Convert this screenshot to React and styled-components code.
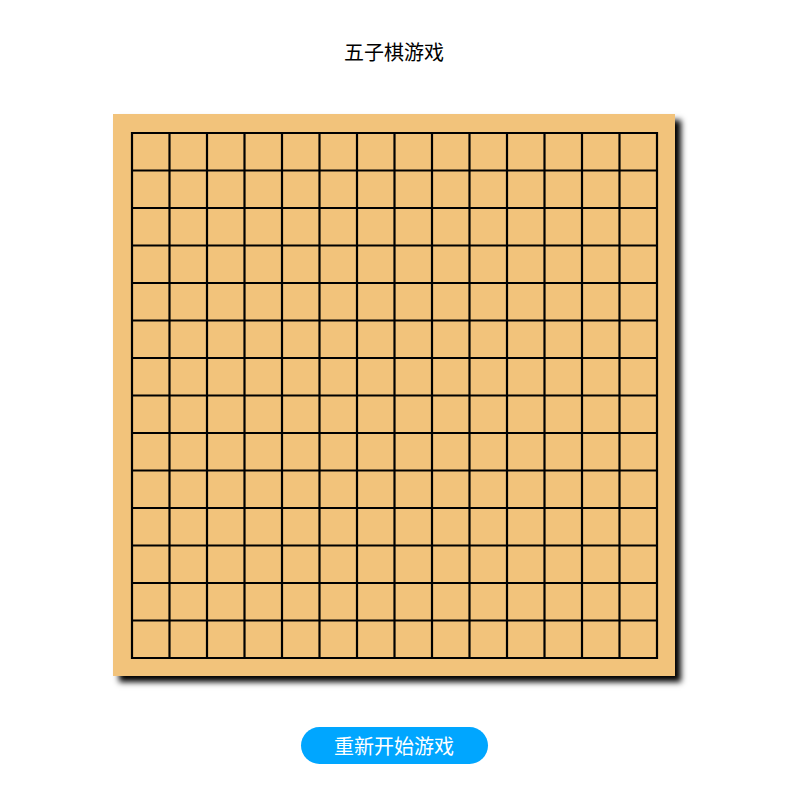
import React from "react";
import styled, { createGlobalStyle } from "styled-components";

const Global = createGlobalStyle`
  html, body { margin: 0; padding: 0; background: #fff; }
  body { font-family: "Noto Sans CJK SC", "Liberation Sans", sans-serif; }
`;

const Page = styled.div`
  display: flex;
  flex-direction: column;
  align-items: center;
  padding-top: 38px;
`;

const Title = styled.h1`
  margin: 0;
  height: 28px;
  line-height: 28px;
  font-size: 20px;
  font-weight: 400;
  color: #000;
`;

const Board = styled.div`
  margin-top: 48px;
  width: 562px;
  height: 562px;
  background: #f2c37b;
  box-shadow: 6px 6px 6px #000;
  display: flex;
`;

const Restart = styled.button`
  margin-top: 51px;
  width: 187px;
  height: 37px;
  border: none;
  border-radius: 19px;
  background: #00a6ff;
  color: #fff;
  font-family: "Noto Sans CJK SC", "Liberation Sans", sans-serif;
  font-size: 20px;
  line-height: 37px;
  padding: 0;
  cursor: pointer;
`;

const SIZE = 15;
const START = 19;
const STEP = 37.5;

function Grid() {
  const end = START + STEP * (SIZE - 1);
  const lines = [];
  for (let i = 0; i < SIZE; i++) {
    const p = START + STEP * i;
    lines.push(<line key={"h" + i} x1={START - 1} y1={p} x2={end + 1} y2={p} />);
    lines.push(<line key={"v" + i} x1={p} y1={START - 1} x2={p} y2={end + 1} />);
  }
  return (
    <svg width="562" height="562" viewBox="0 0 562 562">
      <g stroke="#000" strokeWidth="2.2">{lines}</g>
    </svg>
  );
}

export default function App() {
  return (
    <>
      <Global />
      <Page>
        <Title>五子棋游戏</Title>
        <Board>
          <Grid />
        </Board>
        <Restart>重新开始游戏</Restart>
      </Page>
    </>
  );
}
